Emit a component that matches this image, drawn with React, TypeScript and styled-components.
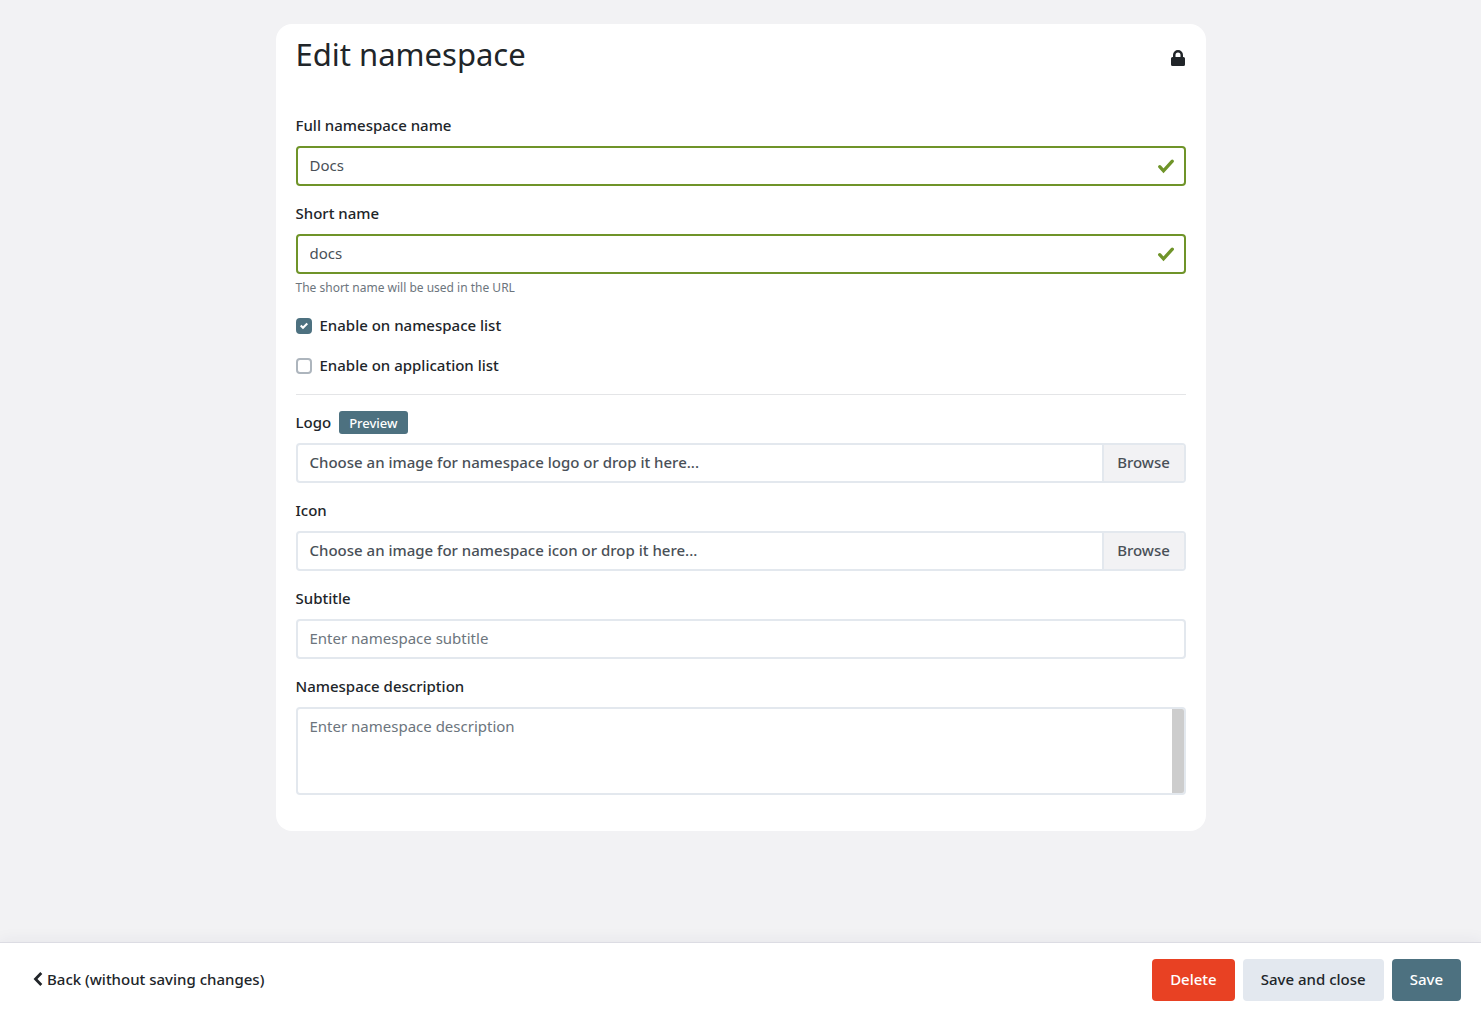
import React, { useState } from "react";
import styled, { createGlobalStyle, css } from "styled-components";

const color = {
  page: "#f2f2f4",
  text: "#212529",
  field: "#495057",
  muted: "#6c757d",
  border: "#e3e8ee",
  valid: "#6f9429",
  primary: "#4d7180",
  danger: "#e84123",
  light: "#e3e8ef",
};

const GlobalStyle = createGlobalStyle`
  *, *::before, *::after { box-sizing: border-box; }
  body {
    margin: 0;
    background: ${color.page};
    color: ${color.text};
    font-family: "Noto Sans", "Open Sans", sans-serif;
    font-size: 15px;
    font-weight: 500;
    line-height: 22px;
  }
  button, input, textarea { font: inherit; color: inherit; margin: 0; }
`;

const Page = styled.div`
  display: flex;
  flex-direction: column;
  min-height: 100vh;
`;

const Main = styled.main`
  flex: 1;
  padding: 24px 16px;
`;

const Card = styled.form`
  max-width: 930px;
  margin: 0 auto;
  padding: 12px 20px 36px;
  border-radius: 16px;
  background: #fff;
`;

const CardHeader = styled.header`
  display: flex;
  align-items: center;
  justify-content: space-between;
  margin-bottom: 40px;
`;

const Title = styled.h1`
  margin: 0;
  padding-bottom: 2px;
  font-size: 31px;
  font-weight: 400;
  line-height: 36px;
`;

const LockButton = styled.button`
  display: flex;
  padding: 6px 0 0;
  border: 0;
  background: none;
  cursor: pointer;
`;

const Fields = styled.div`
  display: flex;
  flex-direction: column;
  gap: 16px;
`;

const Group = styled.div`
  display: flex;
  flex-direction: column;
`;

const LabelRow = styled.div`
  display: flex;
  align-items: flex-start;
  gap: 8px;
  min-height: 24px;
  margin-bottom: 8px;
`;

const Label = styled.label`
  line-height: 22px;
`;

const frame = css`
  width: 100%;
  border: 2px solid ${color.border};
  border-radius: 4px;
  background: #fff;
  color: ${color.field};
`;

const InputWrap = styled.div`
  display: grid;
  align-items: center;
  & > * { grid-area: 1 / 1; }
`;

const TextInput = styled.input<{ $valid?: boolean }>`
  ${frame}
  height: 40px;
  padding: 5px 12px 7px;
  font-weight: 400;
  border-color: ${(p) => (p.$valid ? color.valid : color.border)};
  padding-right: ${(p) => (p.$valid ? "40px" : "12px")};
  &::placeholder { color: ${color.muted}; opacity: 1; }
`;

const ValidMark = styled.svg`
  justify-self: end;
  margin-right: 11px;
  pointer-events: none;
`;

const TextAreaFrame = styled.div`
  ${frame}
  display: flex;
  height: 88px;
  overflow: hidden;
`;

const TextArea = styled.textarea`
  flex: 1;
  min-width: 0;
  padding: 6px 12px;
  border: 0;
  background: none;
  font-weight: 400;
  resize: none;
  scrollbar-width: none;
  &::placeholder { color: ${color.muted}; opacity: 1; }
`;

const ScrollTrack = styled.div`
  width: 12px;
  background: #cdcdcd;
`;

const Help = styled.small`
  margin-top: 4px;
  color: ${color.muted};
  font-size: 12px;
  font-weight: 400;
  line-height: 20px;
`;

const CheckLabel = styled.label`
  display: flex;
  align-items: center;
  gap: 8px;
`;

const CheckText = styled.span`
  padding-bottom: 2px;
`;

const CheckBoxWrap = styled.span`
  display: grid;
  place-items: center;
  & > * { grid-area: 1 / 1; }
`;

const CheckBox = styled.input`
  appearance: none;
  width: 16px;
  height: 16px;
  border: 2px solid #adb5bd;
  border-radius: 4px;
  background: #fff;
  &:checked {
    border-color: ${color.primary};
    background: ${color.primary};
  }
`;

const CheckMark = styled.svg`
  pointer-events: none;
`;

const Divider = styled.hr`
  width: 100%;
  margin: 0;
  border: 0;
  border-top: 1px solid #e4e5e7;
`;

const PreviewButton = styled.button`
  height: 23px;
  padding: 0 10px;
  border: 0;
  border-radius: 3px;
  background: ${color.primary};
  color: #fff;
  font-size: 13px;
  cursor: pointer;
`;

const FilePicker = styled.label`
  ${frame}
  display: flex;
  height: 40px;
  overflow: hidden;
  cursor: pointer;
`;

const FileInput = styled.input`
  position: absolute;
  width: 1px;
  height: 1px;
  opacity: 0;
`;

const FileText = styled.span`
  flex: 1;
  min-width: 0;
  padding: 6px 12px;
  overflow: hidden;
  text-overflow: ellipsis;
  white-space: nowrap;
`;

const Browse = styled.span`
  min-width: 82px;
  padding: 6px 12px;
  border-left: 2px solid ${color.border};
  background: ${color.page};
  text-align: center;
`;

const Footer = styled.footer`
  display: flex;
  flex-wrap: wrap;
  align-items: center;
  justify-content: space-between;
  gap: 16px;
  padding: 16px 20px 16px 33px;
  border-top: 1px solid #dcdce3;
  background: #fff;
  box-shadow: 0 0 16px rgba(40, 40, 80, 0.07);
`;

const BackLink = styled.a`
  display: flex;
  align-items: center;
  gap: 4px;
  padding-bottom: 2px;
  color: ${color.text};
  text-decoration: none;
`;

const Actions = styled.div`
  display: flex;
  gap: 8px;
`;

const tones = {
  danger: { bg: color.danger, fg: "#fff" },
  light: { bg: color.light, fg: color.text },
  primary: { bg: color.primary, fg: "#fff" },
};

const ActionButton = styled.button<{ $tone: keyof typeof tones }>`
  height: 42px;
  padding: 0 18px 2px;
  border: 0;
  border-radius: 4px;
  background: ${(p) => tones[p.$tone].bg};
  color: ${(p) => tones[p.$tone].fg};
  cursor: pointer;
`;

function ValidInput({ id, value }: { id: string; value: string }) {
  return (
    <InputWrap>
      <TextInput id={id} type="text" defaultValue={value} $valid />
      <ValidMark width="18" height="18" viewBox="0 0 18 18" aria-hidden="true">
        <path d="M2.7 9.700 L6.500 13.800 L15.300 4.200" fill="none" stroke={color.valid} strokeWidth="3.300" strokeLinecap="round" />
      </ValidMark>
    </InputWrap>
  );
}

function Check({ label, initial }: { label: string; initial: boolean }) {
  const [on, setOn] = useState(initial);
  return (
    <CheckLabel>
      <CheckBoxWrap>
        <CheckBox type="checkbox" checked={on} onChange={(e) => setOn(e.target.checked)} />
        {on && (
          <CheckMark width="8" height="8" viewBox="0 0 8 8" aria-hidden="true">
            <path fill="#fff" d="M6.564.75l-3.59 3.612-1.538-1.55L0 4.26l2.974 2.99L8 2.193z" />
          </CheckMark>
        )}
      </CheckBoxWrap>
      <CheckText>{label}</CheckText>
    </CheckLabel>
  );
}

function FileField({ id, prompt }: { id: string; prompt: string }) {
  return (
    <FilePicker>
      <FileInput id={id} type="file" accept="image/*" />
      <FileText>{prompt}</FileText>
      <Browse>Browse</Browse>
    </FilePicker>
  );
}

export default function App() {
  return (
    <Page>
      <GlobalStyle />
      <Main>
        <Card id="namespace-form" onSubmit={(e) => e.preventDefault()}>
          <CardHeader>
            <Title>Edit namespace</Title>
            <LockButton type="button" aria-label="Permissions">
              <svg width="16" height="16" viewBox="0 0 16 16" aria-hidden="true">
                <path
                  fill={color.text}
                  fillRule="evenodd"
                  d="M3 7V5a5 5 0 0 1 10 0v2h.5A1.5 1.5 0 0 1 15 8.5v6A1.5 1.5 0 0 1 13.5 16h-11A1.5 1.5 0 0 1 1 14.5v-6A1.5 1.5 0 0 1 2.5 7zM5.5 7h5V5a2.5 2.5 0 0 0-5 0z"
                />
              </svg>
            </LockButton>
          </CardHeader>

          <Fields>
            <Group>
              <LabelRow><Label htmlFor="name">Full namespace name</Label></LabelRow>
              <ValidInput id="name" value="Docs" />
            </Group>

            <Group>
              <LabelRow><Label htmlFor="short">Short name</Label></LabelRow>
              <ValidInput id="short" value="docs" />
              <Help>The short name will be used in the URL</Help>
            </Group>

            <Check label="Enable on namespace list" initial />
            <Check label="Enable on application list" initial={false} />

            <Divider />

            <Group>
              <LabelRow>
                <Label htmlFor="logo">Logo</Label>
                <PreviewButton type="button">Preview</PreviewButton>
              </LabelRow>
              <FileField id="logo" prompt="Choose an image for namespace logo or drop it here..." />
            </Group>

            <Group>
              <LabelRow><Label htmlFor="icon">Icon</Label></LabelRow>
              <FileField id="icon" prompt="Choose an image for namespace icon or drop it here..." />
            </Group>

            <Group>
              <LabelRow><Label htmlFor="subtitle">Subtitle</Label></LabelRow>
              <TextInput id="subtitle" type="text" placeholder="Enter namespace subtitle" />
            </Group>

            <Group>
              <LabelRow><Label htmlFor="description">Namespace description</Label></LabelRow>
              <TextAreaFrame>
                <TextArea id="description" placeholder="Enter namespace description" />
                <ScrollTrack />
              </TextAreaFrame>
            </Group>
          </Fields>
        </Card>
      </Main>

      <Footer>
        <BackLink href="#">
          <svg width="10" height="16" viewBox="0 0 10 16" aria-hidden="true">
            <path d="M8.300 2 L2.500 8 L8.300 14" fill="none" stroke={color.text} strokeWidth="2.800" />
          </svg>
          Back (without saving changes)
        </BackLink>
        <Actions>
          <ActionButton type="button" $tone="danger">Delete</ActionButton>
          <ActionButton type="button" $tone="light">Save and close</ActionButton>
          <ActionButton type="submit" form="namespace-form" $tone="primary">Save</ActionButton>
        </Actions>
      </Footer>
    </Page>
  );
}
